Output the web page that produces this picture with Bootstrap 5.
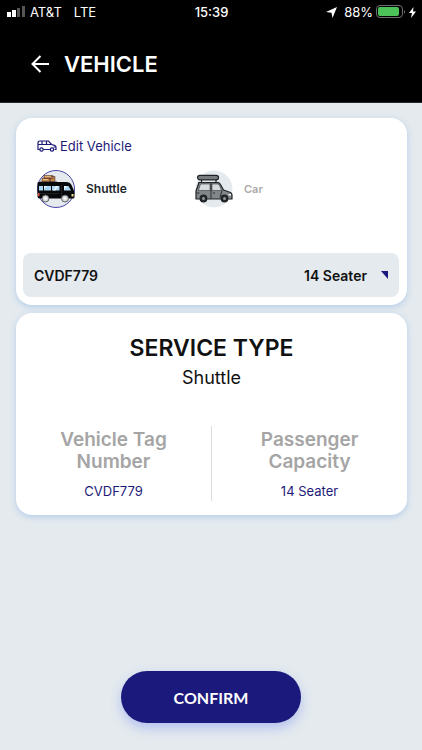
<!DOCTYPE html>
<html lang="en">
<head>
<meta charset="utf-8">
<meta name="viewport" content="width=device-width, initial-scale=1">
<title>Vehicle</title>
<link href="https://cdn.jsdelivr.net/npm/bootstrap@5.3.0/dist/css/bootstrap.min.css" rel="stylesheet">
<style>
body{font-family:Inter,"Liberation Sans",sans-serif;background:#e4eaee;color:#111;font-size:13px;line-height:20px}
svg{display:block;flex:none}
.app-head{background:#000;color:#fff;border-bottom:1px solid #26282c}
.status-bar{display:grid;grid-template-columns:1fr auto 1fr;align-items:center;height:24px;padding:0 6px 0 7px}
.status-bar .clock{font-weight:500}
.status-icons{gap:3px}
.title-bar{height:78px;padding:2px 31px 0;gap:15px}
.title-bar h1{font-size:22px;line-height:28px;font-weight:600}
.panel{background:#fff;border-radius:16px;box-shadow:0 2px 6px #b4cdea}
.panels{padding:15px 15px 0 16px;gap:8px}
.vehicle-panel{padding:18px 8px 8px 7px}
.navy,.navy:hover{color:#1d1a78}
.edit-link{margin-left:14px;gap:3px;font-size:13px}
.choices{margin:14px 14px 0;height:83px}
.choice{gap:11px;font-size:12px;font-weight:600;color:#aaa;cursor:pointer}
.choice:has(:checked){color:#111}
.second-choice{padding-left:13px}
.second-choice .choice{font-size:11px}
.picker{background:#e4eaee;border-radius:8px;height:44px;padding:0 11px;font-size:14px;font-weight:600;color:#111}
.picker-value{gap:14px}
.service-panel{padding:20px 0 14px}
.service-panel h2{font-size:23px;line-height:30px;font-weight:600;margin:0 0 1px}
.service-name{font-size:18px;line-height:28px}
.facts{margin-top:34px}
.fact{padding:3px 40px 0;min-height:75px}
.fact + .fact{border-left:1px solid #dcdcdc}
.fact h3{font-size:19px;line-height:22px;font-weight:600;color:#a5a5a5;margin:0 0 8px}
.confirm,.confirm:hover{width:180px;height:52px;background:#1b197b;color:#fff;font:700 16px Lato,sans-serif;box-shadow:0 5px 12px #b3c0f0}
.foot{padding-bottom:27px}
</style>
</head>
<body class="d-flex flex-column min-vh-100">
<header class="app-head">
  <div class="status-bar">
    <div class="d-flex align-items-center">
      <svg width="19" height="12" viewBox="0 0 19 12" aria-hidden="true"><path fill="#fff" d="M0 6h4v5H0zM5 4h4v7H5z"/><path fill="#555" d="M10 2h3v9h-3zM15 0h3v11h-3z"/></svg>
      <span class="ms-1">AT&amp;T</span><span class="ms-2 ps-1">LTE</span>
    </div>
    <span class="clock">15:39</span>
    <div class="status-icons d-flex align-items-center justify-content-end">
      <svg class="me-1" width="11" height="11" viewBox="0 0 11 11" aria-hidden="true"><path fill="#fff" d="M11 0 6.500 11 5.500 5.700 0 5z"/></svg>
      <span>88%</span>
      <svg width="30" height="14" viewBox="0 0 30 14" aria-hidden="true"><rect x=".5" y=".5" width="26" height="12" rx="3.500" fill="none" stroke="#6c716c"/><rect x="2" y="2" width="21" height="9" rx="2" fill="#4cc259"/><path fill="#777" d="M28 5q2 1.500 0 4z"/></svg>
      <svg width="7" height="11" viewBox="0 0 7 11" aria-hidden="true"><path fill="#fff" d="M4.500 0 0 6h3L2 11l5-6.500H4z"/></svg>
    </div>
  </div>
  <div class="title-bar d-flex align-items-center">
    <button class="btn p-0 border-0 text-white" type="button" aria-label="Back">
      <svg width="18" height="18" viewBox="0 0 18 18" fill="none" stroke="currentColor" stroke-width="2"><path d="M18 9H2M9.500 1 1.500 9l8 8"/></svg>
    </button>
    <h1 class="m-0">VEHICLE</h1>
  </div>
</header>

<main class="panels d-flex flex-column flex-grow-1">
  <section class="panel vehicle-panel">
    <a class="edit-link navy d-flex align-items-center text-decoration-none" href="#edit">
      <svg width="20" height="12" viewBox="0 0 20 12" fill="none" stroke="currentColor" stroke-width="1.200" aria-hidden="true"><path d="M2.500 9.500H1V3q0-2 2-2h8.500l3 3.500 3 .8q1.500.5 1.500 2v2.200h-1.500M6.500 9.500h6.500M1.500 4.500h13M5 1v3.500M9.500 1v3.500M16.500 7H19"/><circle cx="4.500" cy="9.500" r="1.700"/><circle cx="15" cy="9.500" r="1.700"/></svg>
      Edit Vehicle
    </a>
    <div class="choices row gx-0 align-items-start">
      <div class="col-5 d-flex">
        <input class="visually-hidden" type="radio" name="kind" id="kind-shuttle" form="vehicle-form" checked>
        <label class="choice d-flex align-items-center text-dark" for="kind-shuttle">
          <svg width="38" height="38" viewBox="0 0 38 38" aria-hidden="true">
            <circle cx="19" cy="19" r="18.500" fill="#e4eaee" stroke="#4945a3"/>
            <path fill="#c88449" stroke="#3c2a20" stroke-width=".5" d="M5 8h8v4H5zM7 5.500h9v3H7zM13 6.500h5v5h-5z"/><path fill="#ecc08a" d="M8 6.200h6v1H8zM6 9h5v1H6z"/>
            <path stroke="#3a3a3a" stroke-width="1" d="M3 12h17"/>
            <path fill="#08090b" d="M1 12h28q4 0 5.500 3L37.500 22v5q0 1.500-1.500 1.500H2.500Q.5 28.500.5 26V13z"/>
            <path fill="#a9d6f3" d="M2 16h4v4.500H2zM7 16h7v4.500H7zM15 16h7.500v4.500H15zM27 16h4.500l2.500 4.500h-7z"/>
            <path fill="#e8f6ff" d="m10 16-3 3v-3zM19 16l-3 4.500h2.500l3-4.500zM30 16l-3 4v-4z"/>
            <path stroke="#333" stroke-width=".6" d="M24.500 15v12M2 23.500h20"/>
            <path fill="#e8503c" d="M1 23h1.500v3H1z"/><path fill="#f4df91" d="M34.500 24h2v2.500h-2z"/>
            <circle cx="8.500" cy="28.500" r="3.500" fill="#d7dbdd" stroke="#444" stroke-width=".8"/><circle cx="28" cy="28.500" r="3.500" fill="#d7dbdd" stroke="#444" stroke-width=".8"/>
            <circle cx="8.500" cy="28.500" r="1.300" fill="#fff"/><circle cx="28" cy="28.500" r="1.300" fill="#fff"/>
          </svg>
          Shuttle
        </label>
      </div>
      <div class="col-5 d-flex second-choice">
        <input class="visually-hidden" type="radio" name="kind" id="kind-car" form="vehicle-form">
        <label class="choice d-flex align-items-center" for="kind-car">
          <svg width="38" height="38" viewBox="0 0 38 38" aria-hidden="true">
            <circle cx="19" cy="19" r="18.500" fill="#e4eaee"/>
            <g stroke="#202325" stroke-width="1.200" stroke-linejoin="round">
            <path fill="none" d="M6.500 9v3.500M21 9v3.500M3.500 12.500h20"/>
            <rect x="2.500" y="5.300" width="21" height="4.500" rx="2.250" fill="#777c7d"/>
            <path fill="#82888a" d="M4 12.500h18.500q2 0 3 2l3 5.500 7 2.500q1.500.7 1.500 2.500v4H1V21z"/>
            <path fill="#d6dcde" stroke-width=".5" d="M5.500 14h9.500v6.500H3.500zM17 14h5.500q1.300 0 2 1.500l2 5H17z"/>
            <path fill="none" stroke-width=".9" d="M16 13v15.500M27 20.500l-2 7M18 23h2M1.500 23h3"/>
            <circle cx="8.500" cy="28.500" r="3.300" fill="#25282a"/><circle cx="29.500" cy="28.500" r="3.300" fill="#25282a"/></g>
            <circle cx="8.500" cy="28.500" r="1.500" fill="#92999c"/><circle cx="29.500" cy="28.500" r="1.500" fill="#92999c"/>
            <path fill="#f3f5f6" d="M33.500 24h2.500v1.500h-2.500z"/>
          </svg>
          Car
        </label>
      </div>
    </div>
    <button class="picker btn border-0 w-100 d-flex align-items-center justify-content-between" type="button">
      <span>CVDF779</span>
      <span class="picker-value d-flex align-items-center">14 Seater
        <svg width="7" height="8" viewBox="0 0 7 8" aria-hidden="true"><path fill="#1b197b" d="M0 0h7v8z"/></svg>
      </span>
    </button>
  </section>

  <section class="panel service-panel text-center">
    <h2>SERVICE TYPE</h2>
    <div class="service-name">Shuttle</div>
    <div class="facts row gx-0">
      <div class="col fact"><h3>Vehicle Tag Number</h3><div class="navy">CVDF779</div></div>
      <div class="col fact"><h3>Passenger Capacity</h3><div class="navy">14 Seater</div></div>
    </div>
  </section>
</main>

<form class="foot d-flex justify-content-center" id="vehicle-form">
  <button class="confirm btn border-0 rounded-pill" type="submit">CONFIRM</button>
</form>
<script src="https://cdn.jsdelivr.net/npm/bootstrap@5.3.0/dist/js/bootstrap.bundle.min.js"></script>
</body>
</html>
